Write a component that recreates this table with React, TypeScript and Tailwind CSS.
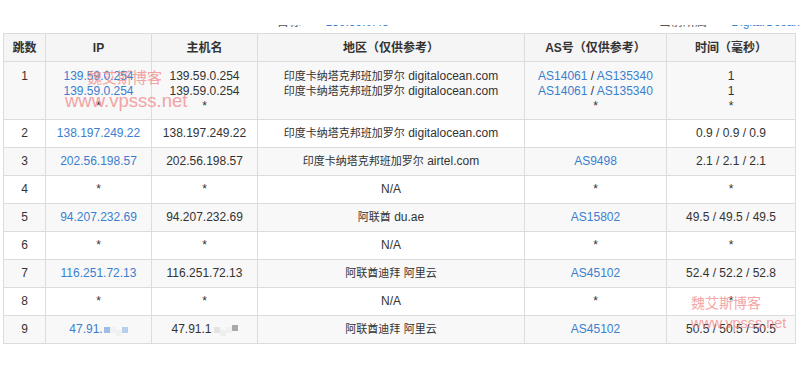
import React from "react";

const F = { fontFamily: '"Liberation Sans", "Noto Sans CJK SC", sans-serif' };

type Cell = React.ReactNode;

const L = ({ children }: { children: React.ReactNode }) => (
  <span className="text-[#3a7fcf]">{children}</span>
);

const C = ({ text }: { text: string }) => (
  <>
    {text.split(/([\u4e00-\u9fff\uff08\uff09]+)/).map((p, i) =>
      /[\u4e00-\u9fff\uff08\uff09]/.test(p) ? (
        <span key={i} className="text-[11px]">{p}</span>
      ) : (
        <span key={i}>{p}</span>
      )
    )}
  </>
);

const rows: { hop: string; ip: Cell; host: Cell; region: string; as: Cell; time: string }[] = [
  { hop: "2", ip: <L>138.197.249.22</L>, host: "138.197.249.22", region: "印度卡纳塔克邦班加罗尔 digitalocean.com", as: "", time: "0.9 / 0.9 / 0.9" },
  { hop: "3", ip: <L>202.56.198.57</L>, host: "202.56.198.57", region: "印度卡纳塔克邦班加罗尔 airtel.com", as: <L>AS9498</L>, time: "2.1 / 2.1 / 2.1" },
  { hop: "4", ip: "*", host: "*", region: "N/A", as: "*", time: "*" },
  { hop: "5", ip: <L>94.207.232.69</L>, host: "94.207.232.69", region: "阿联酋 du.ae", as: <L>AS15802</L>, time: "49.5 / 49.5 / 49.5" },
  { hop: "6", ip: "*", host: "*", region: "N/A", as: "*", time: "*" },
  { hop: "7", ip: <L>116.251.72.13</L>, host: "116.251.72.13", region: "阿联酋迪拜 阿里云", as: <L>AS45102</L>, time: "52.4 / 52.2 / 52.8" },
  { hop: "8", ip: "*", host: "*", region: "N/A", as: "*", time: "*" },
  {
    hop: "9",
    ip: (
      <span className="inline-flex items-center">
        <L>47.91.</L>
        <span className="inline-block w-[6px] h-[6px] bg-[#9dbde6] ml-[1px]" />
        <span className="inline-block w-[6px] h-[6px] bg-[#eef1f6]" />
        <span className="inline-block w-[6px] h-[6px] bg-[#f1f1f1] mt-[6px]" />
        <span className="inline-block w-[6px] h-[6px] bg-[#b8d0ee]" />
      </span>
    ),
    host: (
      <span className="inline-flex items-center">
        <span>47.91.1</span>
        <span className="inline-block w-[6px] h-[6px] bg-[#e4e4e4] ml-[2px]" />
        <span className="inline-block w-[6px] h-[6px] bg-[#efefef] mt-[6px]" />
        <span className="inline-block w-[6px] h-[6px] bg-[#f0f0f0]" />
        <span className="inline-block w-[6px] h-[6px] bg-[#a9a9a9] -mt-[3px]" />
      </span>
    ),
    region: "阿联酋迪拜 阿里云",
    as: <L>AS45102</L>,
    time: "50.5 / 50.5 / 50.5",
  },
];

const td = "border border-[#dcdcdc] text-center align-middle h-[28px] p-0 leading-[15px] whitespace-nowrap";
const th = "border border-[#dcdcdc] text-center align-middle h-[28px] p-0 font-bold text-[12px]";

export default function App() {
  return (
    <div className="w-[800px] h-[376px] bg-white text-[#333] overflow-hidden relative" style={F}>
      <div className="h-[25px]" />
      <div className="h-[5px] overflow-hidden flex text-[12px] leading-[15px]">
        <div className="ml-[277px] -mt-[10px] text-[#555]">目标IP</div>
        <div className="ml-[24px] -mt-[10px] text-[#3a7fcf]">139.59.0.45</div>
        <div className="ml-[270px] -mt-[10px] text-[#555]">当前所属运营商</div>
        <div className="ml-[14px] -mt-[10px] text-[#3a7fcf]">DigitalOcean</div>
      </div>
      <div className="h-[3px]" />
      <table className="ml-[3px] w-[792px] table-fixed border-collapse text-[12px]">
        <colgroup>
          <col className="w-[42px]" />
          <col className="w-[106px]" />
          <col className="w-[106px]" />
          <col className="w-[267px]" />
          <col className="w-[142px]" />
          <col className="w-[129px]" />
        </colgroup>
        <thead>
          <tr className="bg-[#f5f5f5]">
            <th className={th}>跳数</th>
            <th className={th}>IP</th>
            <th className={th}>主机名</th>
            <th className={th}>地区（仅供参考）</th>
            <th className={th}>AS号（仅供参考）</th>
            <th className={th}>时间（毫秒）</th>
          </tr>
        </thead>
        <tbody>
          <tr className="bg-[#f8f8f8]">
            <td className={td + " !align-top h-[58px] pt-[7px]"}>1</td>
            <td className={td + " !align-top pt-[7px]"}>
              <div><L>139.59.0.254</L></div>
              <div><L>139.59.0.254</L></div>
              <div>*</div>
            </td>
            <td className={td + " !align-top pt-[7px]"}>
              <div>139.59.0.254</div>
              <div>139.59.0.254</div>
              <div>*</div>
            </td>
            <td className={td + " !align-top pt-[7px]"}>
              <div><C text="印度卡纳塔克邦班加罗尔 digitalocean.com" /></div>
              <div><C text="印度卡纳塔克邦班加罗尔 digitalocean.com" /></div>
            </td>
            <td className={td + " !align-top pt-[7px]"}>
              <div><L>AS14061</L> / <L>AS135340</L></div>
              <div><L>AS14061</L> / <L>AS135340</L></div>
              <div>*</div>
            </td>
            <td className={td + " !align-top pt-[7px]"}>
              <div>1</div>
              <div>1</div>
              <div>*</div>
            </td>
          </tr>
          {rows.map((r, i) => (
            <tr key={r.hop} className={i % 2 === 1 ? "bg-[#f8f8f8]" : "bg-white"}>
              <td className={td}>{r.hop}</td>
              <td className={td}>{r.ip}</td>
              <td className={td}>{r.host}</td>
              <td className={td}><C text={r.region} /></td>
              <td className={td}>{r.as}</td>
              <td className={td}>{r.time}</td>
            </tr>
          ))}
        </tbody>
      </table>
      <div className="absolute left-[87px] top-[69px] text-[15px] leading-[18px] text-[#f08080] opacity-70">魏艾斯博客</div>
      <div className="absolute left-[65px] top-[90px] text-[18.5px] leading-[22px] text-[#f08080] opacity-70">www.vpsss.net</div>
      <div className="absolute left-[691px] top-[295px] text-[14px] leading-[17px] text-[#f08080] opacity-70">魏艾斯博客</div>
      <div className="absolute left-[691px] top-[315px] text-[14.4px] leading-[17px] text-[#f08080] opacity-70">www.vpsss.net</div>
    </div>
  );
}
